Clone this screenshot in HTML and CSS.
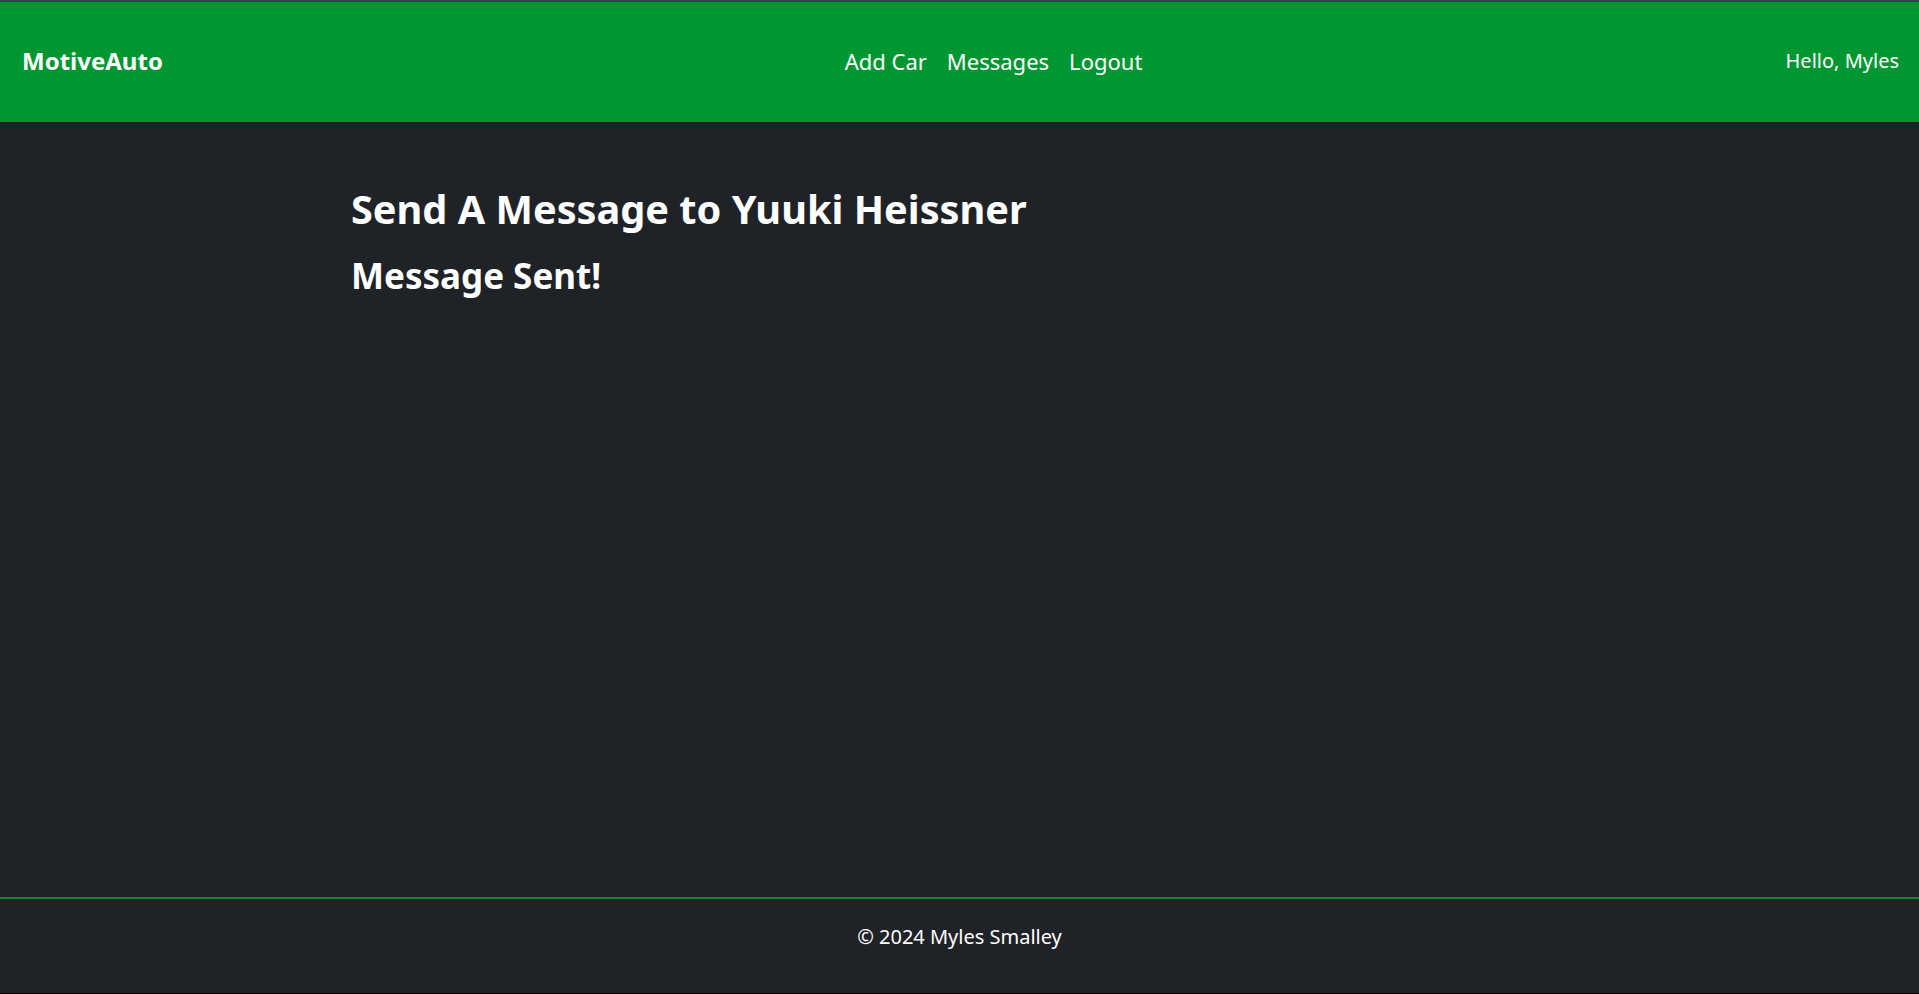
FILE: index.html
```html
<!DOCTYPE html>
<html lang="en">
<head>
<meta charset="utf-8">
<title>MotiveAuto</title>
<link rel="stylesheet" href="styles.css">
</head>
<body>
<div class="page">
  <header class="navbar">
    <a class="brand" href="#">MotiveAuto</a>
    <nav class="nav-links">
      <a href="#">Add Car</a>
      <a href="#">Messages</a>
      <a href="#">Logout</a>
    </nav>
    <div class="greeting">Hello, Myles</div>
  </header>
  <main class="content">
    <h1 class="title">Send A Message to Yuuki Heissner</h1>
    <h2 class="status">Message Sent!</h2>
  </main>
  <footer class="footer">
    <p>&copy; 2024 Myles Smalley</p>
  </footer>
</div>
</body>
</html>
```

FILE: styles.css
```css
* { box-sizing: border-box; }
html, body { margin: 0; padding: 0; }
body {
  background: #1f2227;
  color: #ffffff;
  font-family: "Noto Sans", "Open Sans", sans-serif;
}
.page {
  min-height: 100vh;
  display: flex;
  flex-direction: column;
  border-top: 2px solid #3a3e46;
  border-bottom: 1px solid #000;
}
.navbar {
  height: 120px;
  background: #009733;
  display: flex;
  align-items: center;
  padding: 0 20px 3px 22px;
}
.brand {
  color: #fff;
  text-decoration: none;
  font-weight: 700;
  font-size: 24px;
  flex: 1;
}
.nav-links {
  display: flex;
  gap: 20px;
  font-size: 22px;
  margin-left: 66px;
}
.nav-links a {
  color: #fff;
  text-decoration: none;
}
.greeting {
  flex: 1;
  text-align: right;
  font-size: 20px;
}
.content {
  flex: 1;
  padding: 0 0 0 351px;
}
.title {
  margin: 64px 0 0;
  font-size: 39.7px;
  font-weight: 700;
  line-height: 1.2;
}
.status {
  margin: 21px 0 0;
  font-size: 35px;
  font-weight: 700;
  line-height: 1.2;
}
.footer {
  border-top: 2px solid #0f8a35;
  height: 96px;
  display: flex;
  align-items: flex-start;
  justify-content: center;
  padding-top: 24px;
  font-size: 20px;
}
.footer p { margin: 0; }
```
